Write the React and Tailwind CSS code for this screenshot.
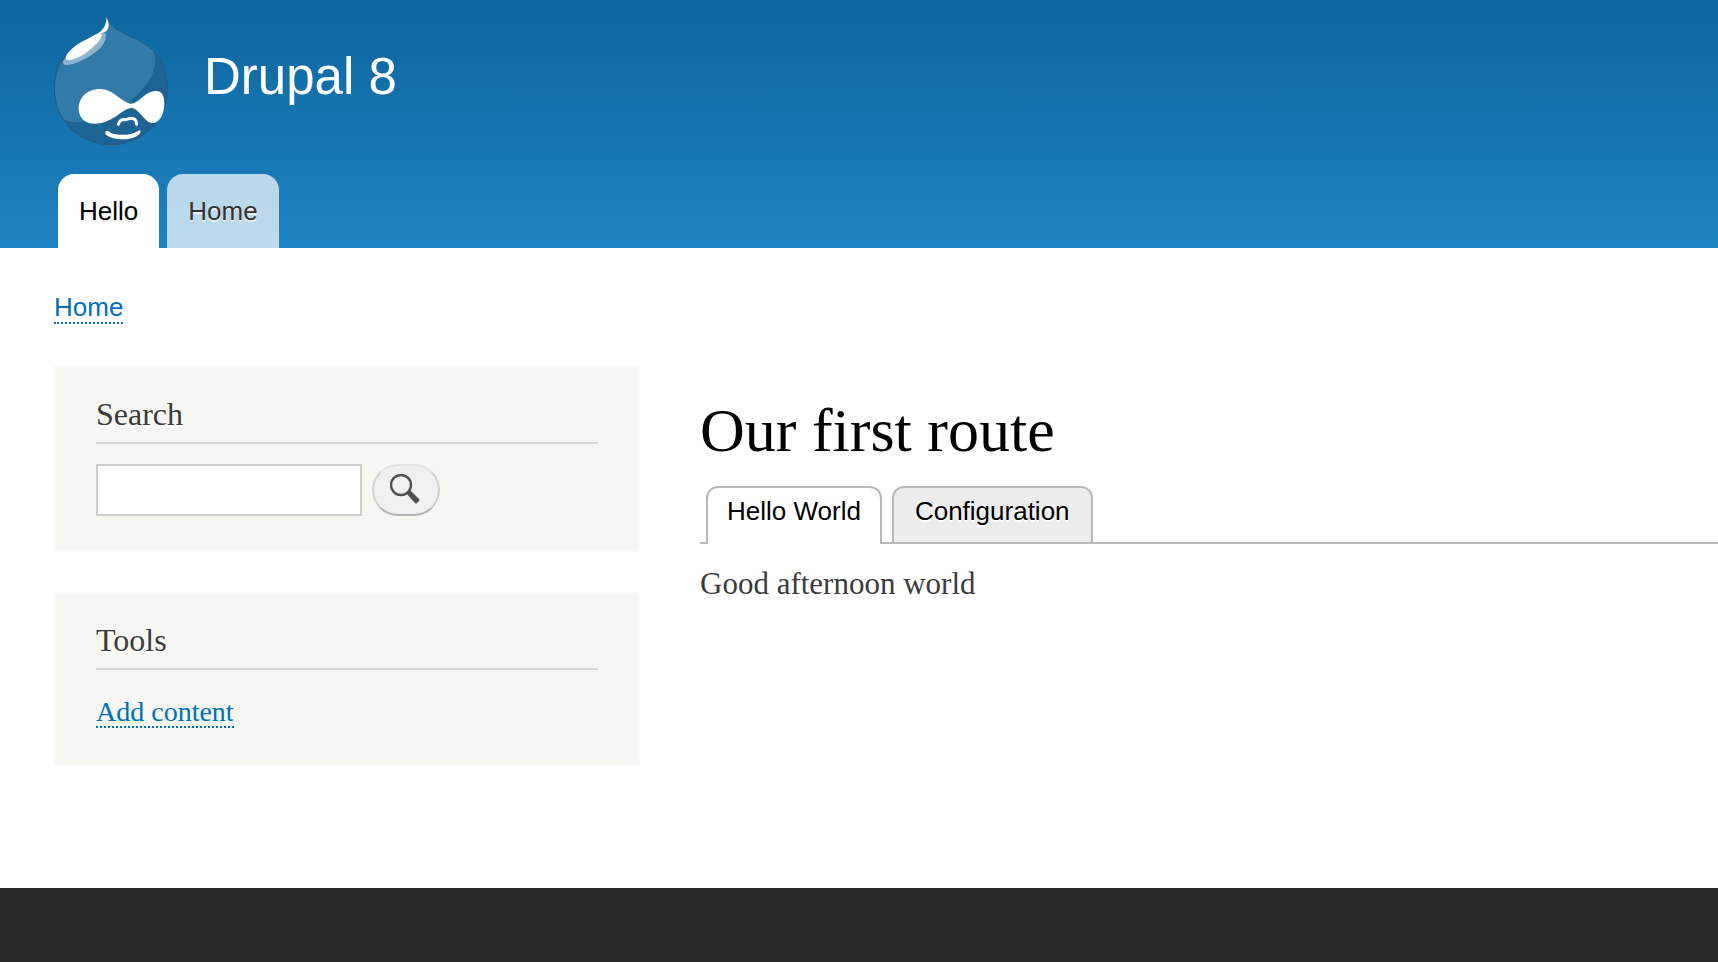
function DrupalLogo() {
  return (
    <svg viewBox="42 48 342 387" className="h-[129px] w-[114px]" aria-hidden="true">
      <path
        d="M201 51C204 66 224 84 243 96C268 111 297 121 320 137C360 166 383 212 383 263C383 362 307 434 213 434C119 434 43 362 43 266C43 212 64 172 96 147C122 127 154 115 179 101C198 91 204 76 201 51Z"
        fill="#1d6494"
        stroke="#285b7f"
        strokeWidth="3"
      />
      <path
        d="M202 54C207 72 226 88 243 97C274 115 309 125 340 153C349 180 347 206 331 234C292 298 216 365 105 366C92 366 80 363 70 356C54 331 45 299 45 266C45 212 66 173 97 149C123 129 155 117 180 103C200 92 205 76 202 54Z"
        fill="#327aa8"
      />
      <path
        d="M69 184C67 190 71 195 80 195C101 195 138 177 163 159C188 141 201 119 197 101C187 95 178 106 165 115C132 138 89 155 69 184Z"
        fill="#8fb5ce"
      />
      <path
        d="M200 50C199 73 192 88 175 99C150 114 118 126 96 146C83 158 75 169 78 177C82 182 96 180 110 174C127 167 146 153 160 140C174 128 188 113 184 100C198 97 206 88 206 75C206 65 202 60 200 50Z"
        fill="#fff"
      />
      <path
        d="M180 267C220 267 247 310 274 311C299 310 314 273 348 273C367 273 373 289 373 311C373 343 358 369 337 369C314 369 298 325 274 324C247 325 218 371 165 371C136 371 116 353 116 326C116 292 142 267 180 267Z"
        fill="#fff"
      />
      <path
        d="M235 373C238 364 246 358 255 359C262 359 264 355 274 355C284 355 289 361 290 373"
        fill="none"
        stroke="#fff"
        strokeWidth="9"
        strokeLinecap="round"
        strokeLinejoin="round"
      />
      <path
        d="M196 395C200 390 206 392 212 398C231 407 270 408 295 392C300 389 304 394 301 399C286 416 263 418 244 418C222 417 203 410 196 402Z"
        fill="#fff"
      />
    </svg>
  );
}

function SearchIcon() {
  return (
    <svg viewBox="0 0 30 30" className="h-[30px] w-[30px]" aria-hidden="true">
      <circle cx="11" cy="11" r="10" fill="none" stroke="#505050" strokeWidth="2.4" />
      <path d="M16 19l4-3 9 9q1 1 0 2l-2 2q-1 1-2 0z" fill="#505050" />
    </svg>
  );
}

function Block({ title, children }) {
  return (
    <section className="border-2 border-[#f9f9f9] bg-[#f6f6f2] px-10 pb-[34px]">
      <h2 className="border-b-2 border-[#d6d6d6] pt-[26px] pb-2 font-['Liberation_Serif',serif] text-[32px] leading-10 text-[#3b3b3b] [text-shadow:0_2px_0_#fff]">
        {title}
      </h2>
      {children}
    </section>
  );
}

export default function App() {
  return (
    <div className="flex min-h-screen flex-col bg-white font-['Liberation_Sans',sans-serif] text-[26px] leading-8 text-[#3b3b3b]">
      <header className="bg-gradient-to-b from-[#0c659d] to-[#1d84c3] pt-4 pl-[54px]">
        <div className="flex h-[158px] items-start gap-9">
          <DrupalLogo />
          <a href="#" className="pt-[33px] text-[51px] leading-[56px] text-white">
            Drupal 8
          </a>
        </div>
        <nav aria-label="Main navigation">
          <ul className="flex gap-2 pl-1">
            <li>
              <a
                href="#"
                className="block h-[74px] rounded-t-2xl bg-white px-[21px] pt-[21px] text-black [text-shadow:0_2px_0_#eee]"
              >
                Hello
              </a>
            </li>
            <li>
              <a
                href="#"
                className="block h-[74px] rounded-t-2xl bg-white/70 px-[21px] pt-[21px] text-[#333] [text-shadow:0_2px_0_#eee]"
              >
                Home
              </a>
            </li>
          </ul>
        </nav>
      </header>

      <main className="pb-[122px] pl-[54px]">
        <nav aria-label="Breadcrumb" className="flex pt-11 pb-[42px]">
          <a href="#" className="border-b-2 border-dotted border-[#0071b3] leading-[30px] text-[#0071b3]">
            Home
          </a>
        </nav>

        <div className="grid grid-cols-[586fr_1018fr] items-start gap-15">
          <aside className="space-y-10">
            <Block title="Search">
              <form className="flex gap-[10px] pt-5" onSubmit={(e) => e.preventDefault()}>
                <input
                  type="search"
                  aria-label="Search"
                  className="h-[52px] w-[266px] border-2 border-[#ccc] bg-white px-2 outline-none"
                />
                <button
                  type="submit"
                  aria-label="Search"
                  className="flex h-[52px] w-[68px] rounded-[26px] border-2 border-t-[#e4e4e4] border-r-[#d2d2d2] border-b-[#b4b4b4] border-l-[#d2d2d2] bg-[#f0f0f0] pt-2 pl-4"
                >
                  <SearchIcon />
                </button>
              </form>
            </Block>

            <Block title="Tools">
              <ul className="flex pt-7 pb-[2px]">
                <li className="flex">
                  <a
                    href="#"
                    className="border-b-2 border-dotted border-[#0071b3] font-['Liberation_Serif',serif] text-[28px] leading-7 text-[#0071b3]"
                  >
                    Add content
                  </a>
                </li>
              </ul>
            </Block>
          </aside>

          <article className="pt-7 font-['Liberation_Serif',serif]">
            <h1 className="text-[62px] leading-[72px] text-black">Our first route</h1>
            <ul className="mt-5 flex gap-[10px] border-b-2 border-[#b8b8b8] pl-[6px] font-['Liberation_Sans',sans-serif] text-black">
              <li>
                <a
                  href="#"
                  className="-mb-[2px] block h-[58px] rounded-t-xl border-2 border-b-0 border-[#b8b8b8] bg-white px-[19px] pt-[7px]"
                >
                  Hello World
                </a>
              </li>
              <li>
                <a
                  href="#"
                  className="block h-[56px] rounded-t-xl border-2 border-b-0 border-[#b8b8b8] bg-[#ededed] px-[21px] pt-[7px] [text-shadow:0_2px_0_#fff]"
                >
                  Configuration
                </a>
              </li>
            </ul>
            <p className="pt-5 text-[31px] leading-10">Good afternoon world</p>
          </article>
        </div>
      </main>

      <footer className="min-h-[74px] flex-1 bg-[#292929]" />
    </div>
  );
}
